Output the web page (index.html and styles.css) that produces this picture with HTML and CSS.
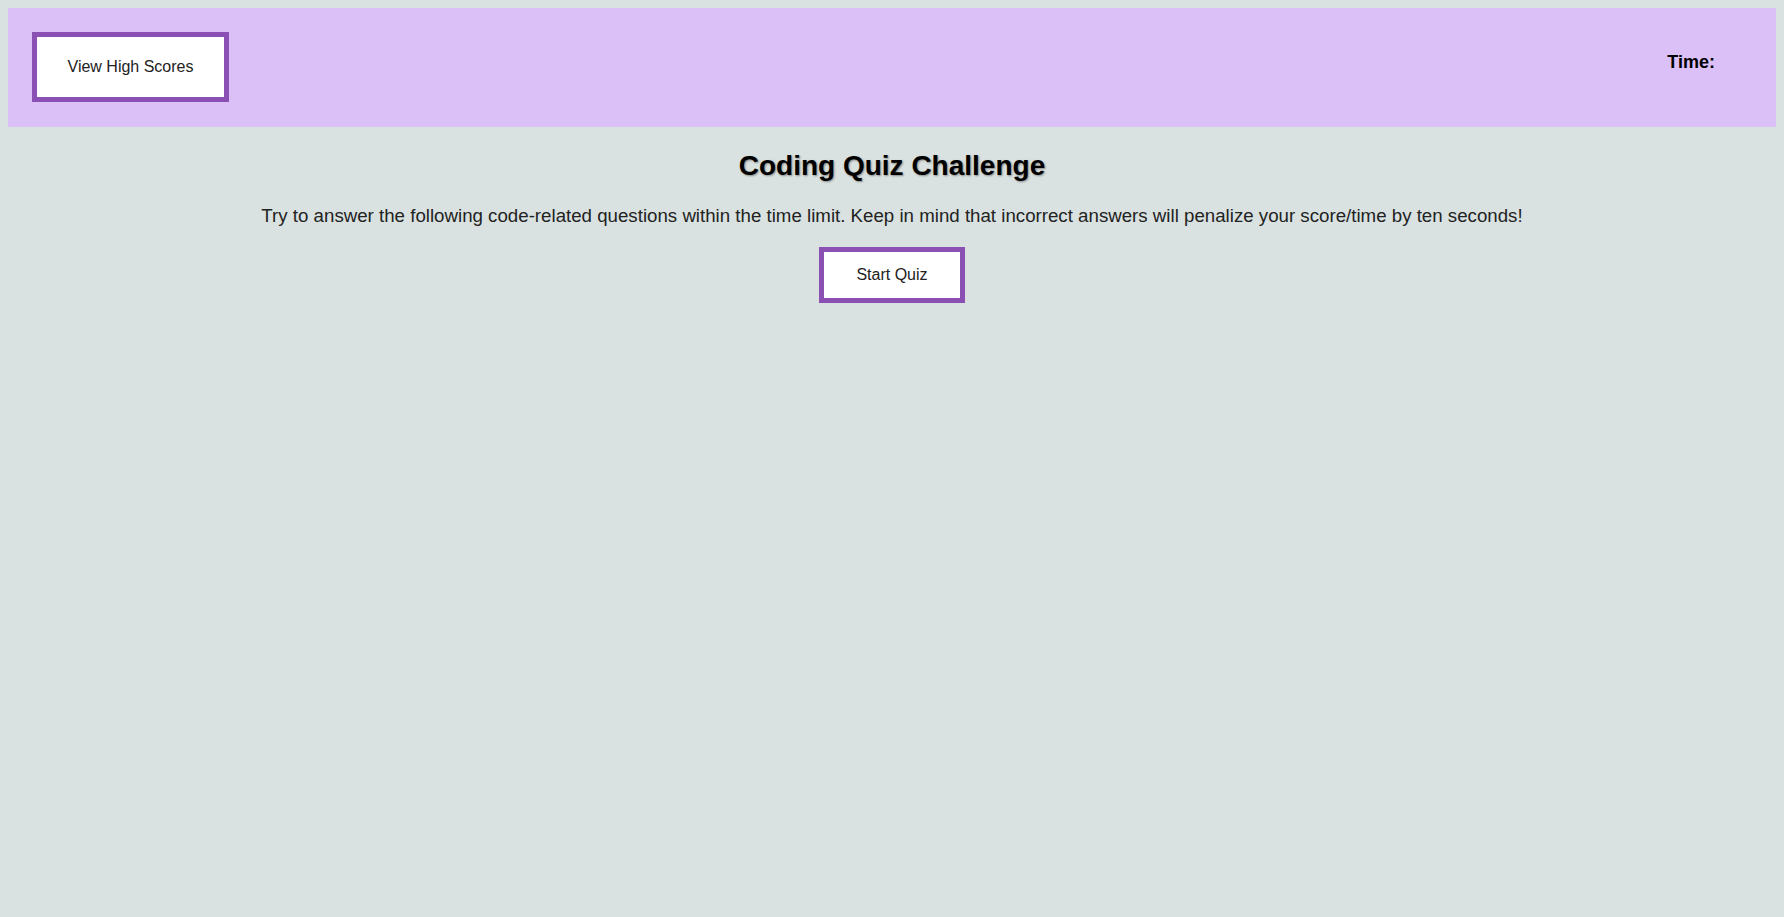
FILE: index.html
```html
<!DOCTYPE html>
<html>
<head>
<meta charset="utf-8">
<link rel="stylesheet" href="styles.css">
</head>
<body>
<header class="topbar">
  <button class="btn btn-scores">View High Scores</button>
  <div class="timer">Time: <span class="time-val"></span></div>
</header>
<main class="intro">
  <h1 class="title">Coding Quiz Challenge</h1>
  <p class="lead">Try to answer the following code-related questions within the time limit. Keep in mind that incorrect answers will penalize your score/time by ten seconds!</p>
  <button class="btn btn-start">Start Quiz</button>
</main>
</body>
</html>
```
FILE: styles.css
```css
html, body {
  background: #d9e2e1;
}
body {
  margin: 8px;
  font-family: "Liberation Sans", Arial, sans-serif;
  color: #222;
}
.topbar {
  background: #dbbff7;
  display: flex;
  justify-content: space-between;
  align-items: flex-start;
  padding: 24px 61px 25px 24px;
}
.btn {
  background: #fff;
  border: 5px solid #8a50b3;
  font-family: "Liberation Sans", Arial, sans-serif;
  font-size: 16px;
  color: #222;
  cursor: pointer;
}
.btn-scores {
  width: 197px;
  height: 70px;
}
.timer {
  font-weight: bold;
  font-size: 18px;
  color: #000;
  margin-top: 20px;
}
.intro {
  text-align: center;
}
.title {
  font-size: 28px;
  margin: 23px 0 0;
  color: #000;
  text-shadow: 1px 1px 2px #888;
}
.lead {
  font-size: 18.7px;
  margin: 23px 0 20px;
  color: #222;
}
.btn-start {
  width: 146px;
  height: 56px;
}
```
